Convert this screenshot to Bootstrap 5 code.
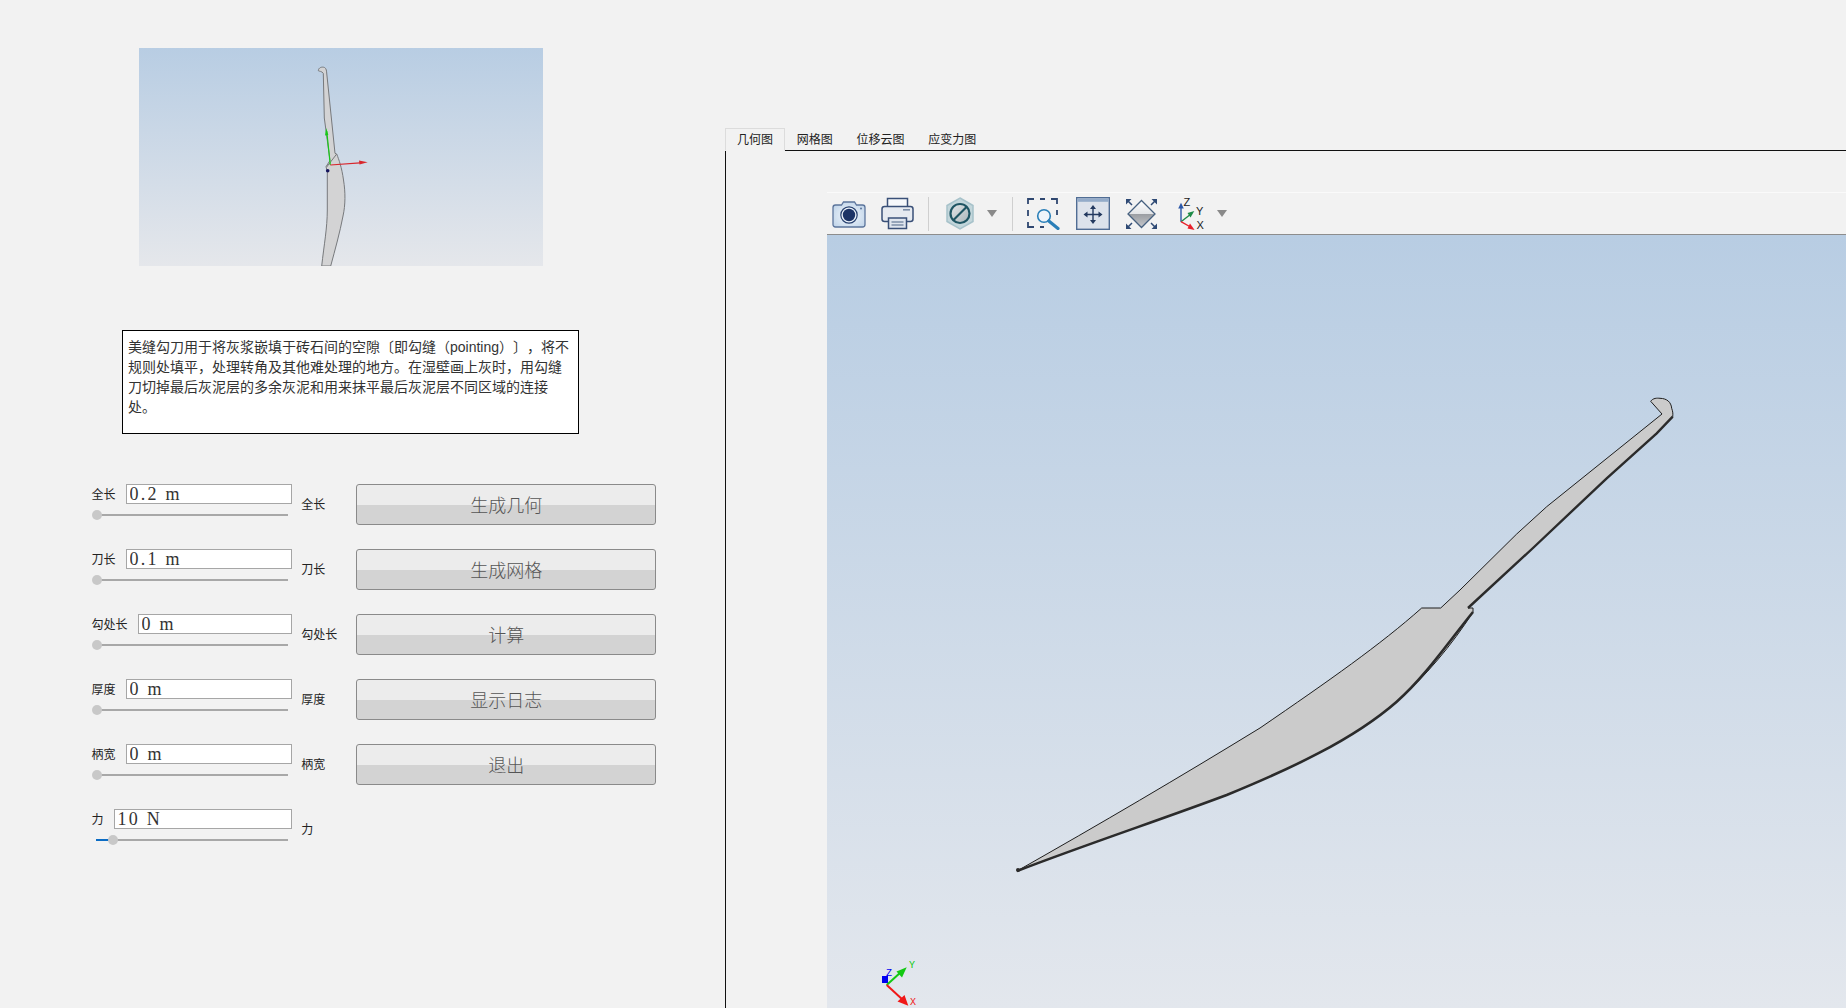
<!DOCTYPE html>
<html lang="zh-CN">
<head>
  <meta charset="UTF-8" />
  <title>美缝勾刀</title>
  <link href="https://cdn.jsdelivr.net/npm/bootstrap@5.3.0/dist/css/bootstrap.min.css" rel="stylesheet" />
  <style>
    html, body { height: 100%; }
    body {
      background: #f2f2f2;
      font-family: "Liberation Sans", "Noto Sans CJK SC", sans-serif;
      overflow: hidden;
      text-spacing-trim: space-all;
    }
    .left-pane { width: 725px; flex: none; padding-top: 48px; }
    .thumb-view { width: 404px; height: 218px; margin-left: 139px; background: linear-gradient(#b8cde3, #e5e7eb); }
    .thumb-view svg, .model-view svg { display: block; width: 100%; height: 100%; }
    .desc-box {
      width: 457px; height: 104px; margin: 64px 0 0 122px; padding: 6px 5px;
      background: #fff; border: 1px solid #000; font-size: 14px; line-height: 20px; color: #333; white-space: nowrap;
    }
    .ctrl-list { margin: 50px 0 0 91.5px; display: grid; row-gap: 24px; }
    .ctrl-row { display: flex; align-items: flex-start; height: 41px; }
    .ctrl-group { width: 200px; flex: none; }
    .ctrl-top { display: flex; gap: 10px; }
    .ctrl-label { font-size: 12px; line-height: 20px; color: #222; margin: 0; padding-top: 1px; white-space: nowrap; }
    .side-label { width: 55px; margin-left: 9.7px; flex: none; line-height: 41px; }
    .value-box.form-control {
      height: 20px; min-height: 0; padding: 1px 3px 0; border: 1px solid #a6a6a6; border-radius: 0; background: #fff;
      font-family: "Liberation Serif", "Noto Sans CJK SC", serif; font-size: 18px; letter-spacing: 2.25px; line-height: 18px; color: #333;
    }
    .slide-bar.form-range { display: block; width: 196.5px; height: 10px; margin-top: 5px; padding: 0; }
    .slide-bar::-webkit-slider-runnable-track { height: 2px; border-radius: 0; background: linear-gradient(to right, transparent 4.5px, #a8a8a8 4.5px); }
    .slide-bar::-webkit-slider-thumb {
      -webkit-appearance: none; appearance: none; width: 10px; height: 10px; margin-top: -4px;
      border-radius: 50%; background: #c8c8c8; border: 0;
    }
    .slide-bar.is-force::-webkit-slider-runnable-track { background: linear-gradient(to right, transparent 4.5px, #0b6cc4 4.5px 17px, #a8a8a8 17px); }
    .gen-btn.btn {
      width: 300px; height: 41px; flex: none; padding: 0 0 1px; border: 1px solid #8a8a8a; border-radius: 3px;
      background: linear-gradient(#ececec 0 51%, #d3d3d3 51%);
      font-size: 18px; line-height: 1; color: #555; font-family: "Noto Sans CJK SC", sans-serif; font-weight: 300;
    }
    .right-pane { flex: 1; min-width: 0; padding-top: 128px; display: flex; flex-direction: column; }
    .view-tabs.nav-tabs { border-bottom: 1px solid #111; height: 23px; flex: none; flex-wrap: nowrap; }
    .view-tabs .nav-link {
      height: 23px; padding: 0 10.9px; border: 1px solid transparent; border-radius: 0; border-bottom: 0;
      font-size: 12px; line-height: 23px; color: #222; background: none;
    }
    .view-tabs .nav-link.active { border-color: #dcdcdc; background: #f2f2f2; color: #222; border-bottom: 1px solid #f2f2f2; height: 23px; }
    .tab-panel { flex: 1; min-height: 0; border-left: 1px solid #111; padding: 41px 0 0 101px; display: flex; flex-direction: column; }
    .tool-strip { height: 43px; flex: none; background: #f2f2f2; border-top: 1px solid #fafafa; border-bottom: 1px solid #8d8d8d; padding-left: 5px; }
    .tool-strip svg { display: block; flex: none; }
    .tool-sep { width: 1px; height: 34px; background: #cfcfcf; flex: none; }
    .tm-11 { margin-left: 11px; }
    .tm-13 { margin-left: 13px; }
    .tm-14 { margin-left: 14px; }
    .tm-15 { margin-left: 15px; }
    .tm-16 { margin-left: 16px; }
    .tm-17 { margin-left: 17px; }
    .tm-20 { margin-left: 20px; }
    .model-view { flex: 1; min-height: 0; background: linear-gradient(#b8cde3, #e3e7ed); }
  </style>
</head>
<body>
  <div class="d-flex h-100">
    <div class="left-pane">
      <div class="thumb-view">
        <svg viewBox="139 48 404 218">
          <path d="M318.3 70.7C318.5 67.5 322 66.5 324.5 67.5C326.5 68.5 326.5 71 326.8 74L335 153.3L336.7 154C339 160 341.7 167 343.5 180C345.5 192 345.5 205 343 216C340 232 335 250 330.7 266H321.7C324 245 327.3 228 327.3 210V171.7L326 166.7L330 160.5L324.3 118L323.3 73.3C321.5 71 319.5 71.5 318.3 70.7Z" fill="#d3d3d4" stroke="#77797c" stroke-width="1" />
          <path d="M326.7 167L336.7 154" stroke="#77797c" stroke-width="1" fill="none" />
          <path d="M330.3 165L326.7 131" stroke="#17c917" stroke-width="1.2" fill="none" />
          <path d="M326.2 128L328.3 135L325 135.5Z" fill="#17c917" />
          <path d="M330.3 165L360 162.8" stroke="#d8262c" stroke-width="1.2" fill="none" />
          <path d="M367.7 162.3L359 160.5L359.5 164.5Z" fill="#d8262c" />
          <circle cx="327.7" cy="170.7" r="1.8" fill="#14145e" />
        </svg>
      </div>
      <div class="desc-box">美缝勾刀用于将灰浆嵌填于砖石间的空隙〔即勾缝（pointing）〕，将不<br />规则处填平，处理转角及其他难处理的地方。在湿壁画上灰时，用勾缝<br />刀切掉最后灰泥层的多余灰泥和用来抹平最后灰泥层不同区域的连接<br />处。</div>

      <div class="ctrl-list">
        <div class="ctrl-row">
          <div class="ctrl-group">
            <div class="ctrl-top"><label class="ctrl-label">全长</label><input type="text" class="form-control value-box" value="0.2 m" /></div>
            <input type="range" class="form-range slide-bar" min="0" max="113" value="0" />
          </div>
          <span class="ctrl-label side-label">全长</span>
          <button type="button" class="btn gen-btn">生成几何</button>
        </div>
        <div class="ctrl-row">
          <div class="ctrl-group">
            <div class="ctrl-top"><label class="ctrl-label">刀长</label><input type="text" class="form-control value-box" value="0.1 m" /></div>
            <input type="range" class="form-range slide-bar" min="0" max="113" value="0" />
          </div>
          <span class="ctrl-label side-label">刀长</span>
          <button type="button" class="btn gen-btn">生成网格</button>
        </div>
        <div class="ctrl-row">
          <div class="ctrl-group">
            <div class="ctrl-top"><label class="ctrl-label">勾处长</label><input type="text" class="form-control value-box" value="0 m" /></div>
            <input type="range" class="form-range slide-bar" min="0" max="113" value="0" />
          </div>
          <span class="ctrl-label side-label">勾处长</span>
          <button type="button" class="btn gen-btn">计算</button>
        </div>
        <div class="ctrl-row">
          <div class="ctrl-group">
            <div class="ctrl-top"><label class="ctrl-label">厚度</label><input type="text" class="form-control value-box" value="0 m" /></div>
            <input type="range" class="form-range slide-bar" min="0" max="113" value="0" />
          </div>
          <span class="ctrl-label side-label">厚度</span>
          <button type="button" class="btn gen-btn">显示日志</button>
        </div>
        <div class="ctrl-row">
          <div class="ctrl-group">
            <div class="ctrl-top"><label class="ctrl-label">柄宽</label><input type="text" class="form-control value-box" value="0 m" /></div>
            <input type="range" class="form-range slide-bar" min="0" max="113" value="0" />
          </div>
          <span class="ctrl-label side-label">柄宽</span>
          <button type="button" class="btn gen-btn">退出</button>
        </div>
        <div class="ctrl-row">
          <div class="ctrl-group">
            <div class="ctrl-top"><label class="ctrl-label">力</label><input type="text" class="form-control value-box" value="10 N" /></div>
            <input type="range" class="form-range slide-bar is-force" min="0" max="113" value="10" />
          </div>
          <span class="ctrl-label side-label">力</span>
        </div>
      </div>
    </div>

    <div class="right-pane">
      <ul class="nav nav-tabs view-tabs">
        <li class="nav-item"><a class="nav-link active" href="#">几何图</a></li>
        <li class="nav-item"><a class="nav-link" href="#">网格图</a></li>
        <li class="nav-item"><a class="nav-link" href="#">位移云图</a></li>
        <li class="nav-item"><a class="nav-link" href="#">应变力图</a></li>
      </ul>
      <div class="tab-panel">
        <div class="tool-strip d-flex align-items-center">
          <!-- camera -->
          <svg width="34" height="30" viewBox="0 0 34 30">
            <defs>
              <radialGradient id="camBody" cx="50%" cy="55%" r="60%"><stop offset="0" stop-color="#f4f8fc" /><stop offset="1" stop-color="#c3d6ea" /></radialGradient>
            </defs>
            <path d="M1 8.5C1 7 2 6 3.5 6H9.5L11.5 3H22.5L24.5 6H30.5C32 6 33 7 33 8.5V25.5C33 27 32 28 30.5 28H3.5C2 28 1 27 1 25.5Z" fill="url(#camBody)" stroke="#5c759c" stroke-width="1.3" />
            <circle cx="17" cy="16" r="8.2" fill="#e9f0f8" stroke="#27406f" stroke-width="1.2" />
            <circle cx="17" cy="16" r="6.2" fill="#1c3366" />
            <circle cx="29" cy="9.5" r="1" fill="#5c759c" />
          </svg>
          <!-- printer -->
          <svg class="tm-15" width="33" height="33" viewBox="0 0 33 33">
            <path d="M6.5 10V1.5H26.5V10" fill="#f6f8fb" stroke="#3a5078" stroke-width="1.5" />
            <rect x="1" y="9.5" width="31" height="15" rx="2.5" fill="#e6eaf0" stroke="#3a5078" stroke-width="1.5" />
            <rect x="22" y="12" width="7" height="1.6" fill="#7d8ea8" />
            <path d="M7.5 21H25.5V31.5H7.5Z" fill="#dfe5ee" stroke="#3a5078" stroke-width="1.5" />
            <path d="M10.5 25H22.5M10.5 28H22.5" stroke="#7d8ea8" stroke-width="1.3" />
          </svg>
          <div class="tool-sep tm-14"></div>
          <!-- hexagon with slashed disc -->
          <svg class="tm-17" width="28" height="33" viewBox="0 0 28 33">
            <defs>
              <linearGradient id="hexDisc" x1="0" y1="0" x2="1" y2="1"><stop offset="0" stop-color="#e4e8ea" /><stop offset="1" stop-color="#a9b4b8" /></linearGradient>
            </defs>
            <path d="M14 1L27 8.5V24.5L14 32L1 24.5V8.5Z" fill="#c3d6db" stroke="#a7c2ca" stroke-width="1.5" />
            <circle cx="14" cy="16.5" r="9.5" fill="url(#hexDisc)" stroke="#1f5563" stroke-width="2.2" />
            <path d="M7.5 23L20.5 10" stroke="#1f5563" stroke-width="2.2" />
          </svg>
          <svg class="tm-13" width="10" height="7" viewBox="0 0 10 7"><path d="M0 0H10L5 7Z" fill="#8a8a8a" /></svg>
          <div class="tool-sep tm-15"></div>
          <!-- zoom box -->
          <svg class="tm-14" width="33" height="32" viewBox="0 0 33 32">
            <path d="M1 6V1H7M13 1H18M24 1H30V6M30 12V17M1 12V18M1 24V29H7M13 29H17" fill="none" stroke="#2f4770" stroke-width="1.8" />
            <circle cx="17" cy="18" r="6.3" fill="#eef4fa" stroke="#2a7fb8" stroke-width="1.6" />
            <path d="M21.8 23L31 30.5" stroke="#2a7fb8" stroke-width="3.2" stroke-linecap="round" />
          </svg>
          <!-- pan window -->
          <svg class="tm-16" width="34" height="33" viewBox="0 0 34 33">
            <rect x=".7" y=".7" width="32.6" height="31.6" fill="#dce2eb" stroke="#506d94" stroke-width="1.4" />
            <rect x="1.4" y="1.4" width="31.2" height="3.4" fill="#93abc9" />
            <path d="M17 10V25M9.5 17.5H24.5" stroke="#23395f" stroke-width="1.4" />
            <path d="M17 8L14 12H20ZM17 27L14 23H20ZM7.5 17.5L11.5 14.5V20.5ZM26.5 17.5L22.5 14.5V20.5Z" fill="#23395f" />
          </svg>
          <!-- fit all -->
          <svg class="tm-15" width="33" height="32" viewBox="0 0 33 32">
            <defs>
              <linearGradient id="fitTop" x1="0" y1="0" x2="0" y2="1"><stop offset="0" stop-color="#fff" /><stop offset="1" stop-color="#e2e4e7" /></linearGradient>
              <linearGradient id="fitLow" x1="0" y1="0" x2="0" y2="1"><stop offset="0" stop-color="#9a9da2" /><stop offset="1" stop-color="#c6c8cc" /></linearGradient>
            </defs>
            <path d="M16.5 2.5L30 16H3Z" fill="url(#fitTop)" />
            <path d="M3 16H30L16.5 29.5Z" fill="url(#fitLow)" />
            <path d="M16.5 2.5L30 16L16.5 29.5L3 16Z" fill="none" stroke="#46607f" stroke-width="1.3" />
            <path d="M1 1H6.5L1 6.5ZM32 1H26.5L32 6.5ZM1 31H6.5L1 25.5ZM32 31H26.5L32 25.5Z" fill="#2f4a75" />
            <path d="M2 2L7 7M31 2L26 7M2 30L7 25M31 30L26 25" stroke="#2f4a75" stroke-width="1.5" />
          </svg>
          <!-- orientation triad -->
          <svg class="tm-20" width="28" height="34" viewBox="0 0 28 34">
            <path d="M3 24.7V9" stroke="#2c58a8" stroke-width="1.4" />
            <path d="M3 5.7L.2 11.5H5.8Z" fill="#2c58a8" />
            <path d="M3 24.7L13 17" stroke="#1d8a46" stroke-width="1.4" />
            <path d="M16.3 14L9.5 16L12.5 20.5Z" fill="#1d8a46" />
            <path d="M3 24.7L12.5 30" stroke="#e8202a" stroke-width="1.4" />
            <path d="M16.6 33L9.5 31.5L12 26.5Z" fill="#e8202a" />
            <text x="5.5" y="9" font-family="Liberation Sans, sans-serif" font-size="11" fill="#222">Z</text>
            <text x="18" y="18" font-family="Liberation Sans, sans-serif" font-size="11" fill="#222">Y</text>
            <text x="18.5" y="32" font-family="Liberation Sans, sans-serif" font-size="11" fill="#222">X</text>
          </svg>
          <svg class="tm-11" width="10" height="7" viewBox="0 0 10 7"><path d="M0 0H10L5 7Z" fill="#8a8a8a" /></svg>
        </div>
        <div class="model-view">
          <svg viewBox="827 235 1019 773" preserveAspectRatio="xMinYMin slice">
            <!-- blade body -->
            <path d="M1017 871C1100 824 1180 777 1260 728C1330 680 1380 645 1421.7 608H1440.7L1460 590L1516.7 534L1546.7 506.7L1662 414L1650.7 401.3C1653 398 1657 398 1660 398.3C1667 398.5 1671 402 1671.7 408.3C1673 412 1673 414 1672.7 416.7L1656.7 433.3L1606.7 478.3L1533 548L1468 608H1473V612C1452 645 1425 677 1396.7 701.7C1353 740 1290 769 1226.7 795C1160 820 1090 843 1017 871Z" fill="#cbcbcb" stroke="#1e1e1e" stroke-width="1" stroke-linejoin="round" />
            <!-- shaded underside -->
            <path d="M1017 871C1090 843 1160 820 1226.7 795C1290 769 1353 740 1396.7 701.7C1425 677 1450 640 1473 612" fill="none" stroke="#2b2b2b" stroke-width="2.6" />
            <path d="M1672.7 416.7L1656.7 433.3L1606.7 478.3L1533 548L1468 608" fill="none" stroke="#2b2b2b" stroke-width="2.4" />
            <circle cx="1018" cy="870" r="2" fill="#2b2b2b" />
            <!-- axis triad -->
            <rect x="882" y="976" width="6" height="7" fill="#0000f0" />
            <path d="M886.7 985L901 972" stroke="#12c912" stroke-width="2" />
            <path d="M906.7 967.3L896.5 971.5L902 977.5Z" fill="#12c912" />
            <path d="M886.7 985L903 1000" stroke="#f01818" stroke-width="2" />
            <path d="M908.3 1005.7L904.5 995L897.5 1001.5Z" fill="#f01818" />
            <text x="886" y="976" font-family="Liberation Mono, monospace" font-size="10" fill="#0000f0">Z</text>
            <text x="909" y="968" font-family="Liberation Mono, monospace" font-size="10" fill="#12c912">Y</text>
            <text x="910" y="1005" font-family="Liberation Mono, monospace" font-size="10" fill="#f01818">X</text>
          </svg>
        </div>
      </div>
    </div>
  </div>
  <script src="https://cdn.jsdelivr.net/npm/bootstrap@5.3.0/dist/js/bootstrap.bundle.min.js"></script>
</body>
</html>
